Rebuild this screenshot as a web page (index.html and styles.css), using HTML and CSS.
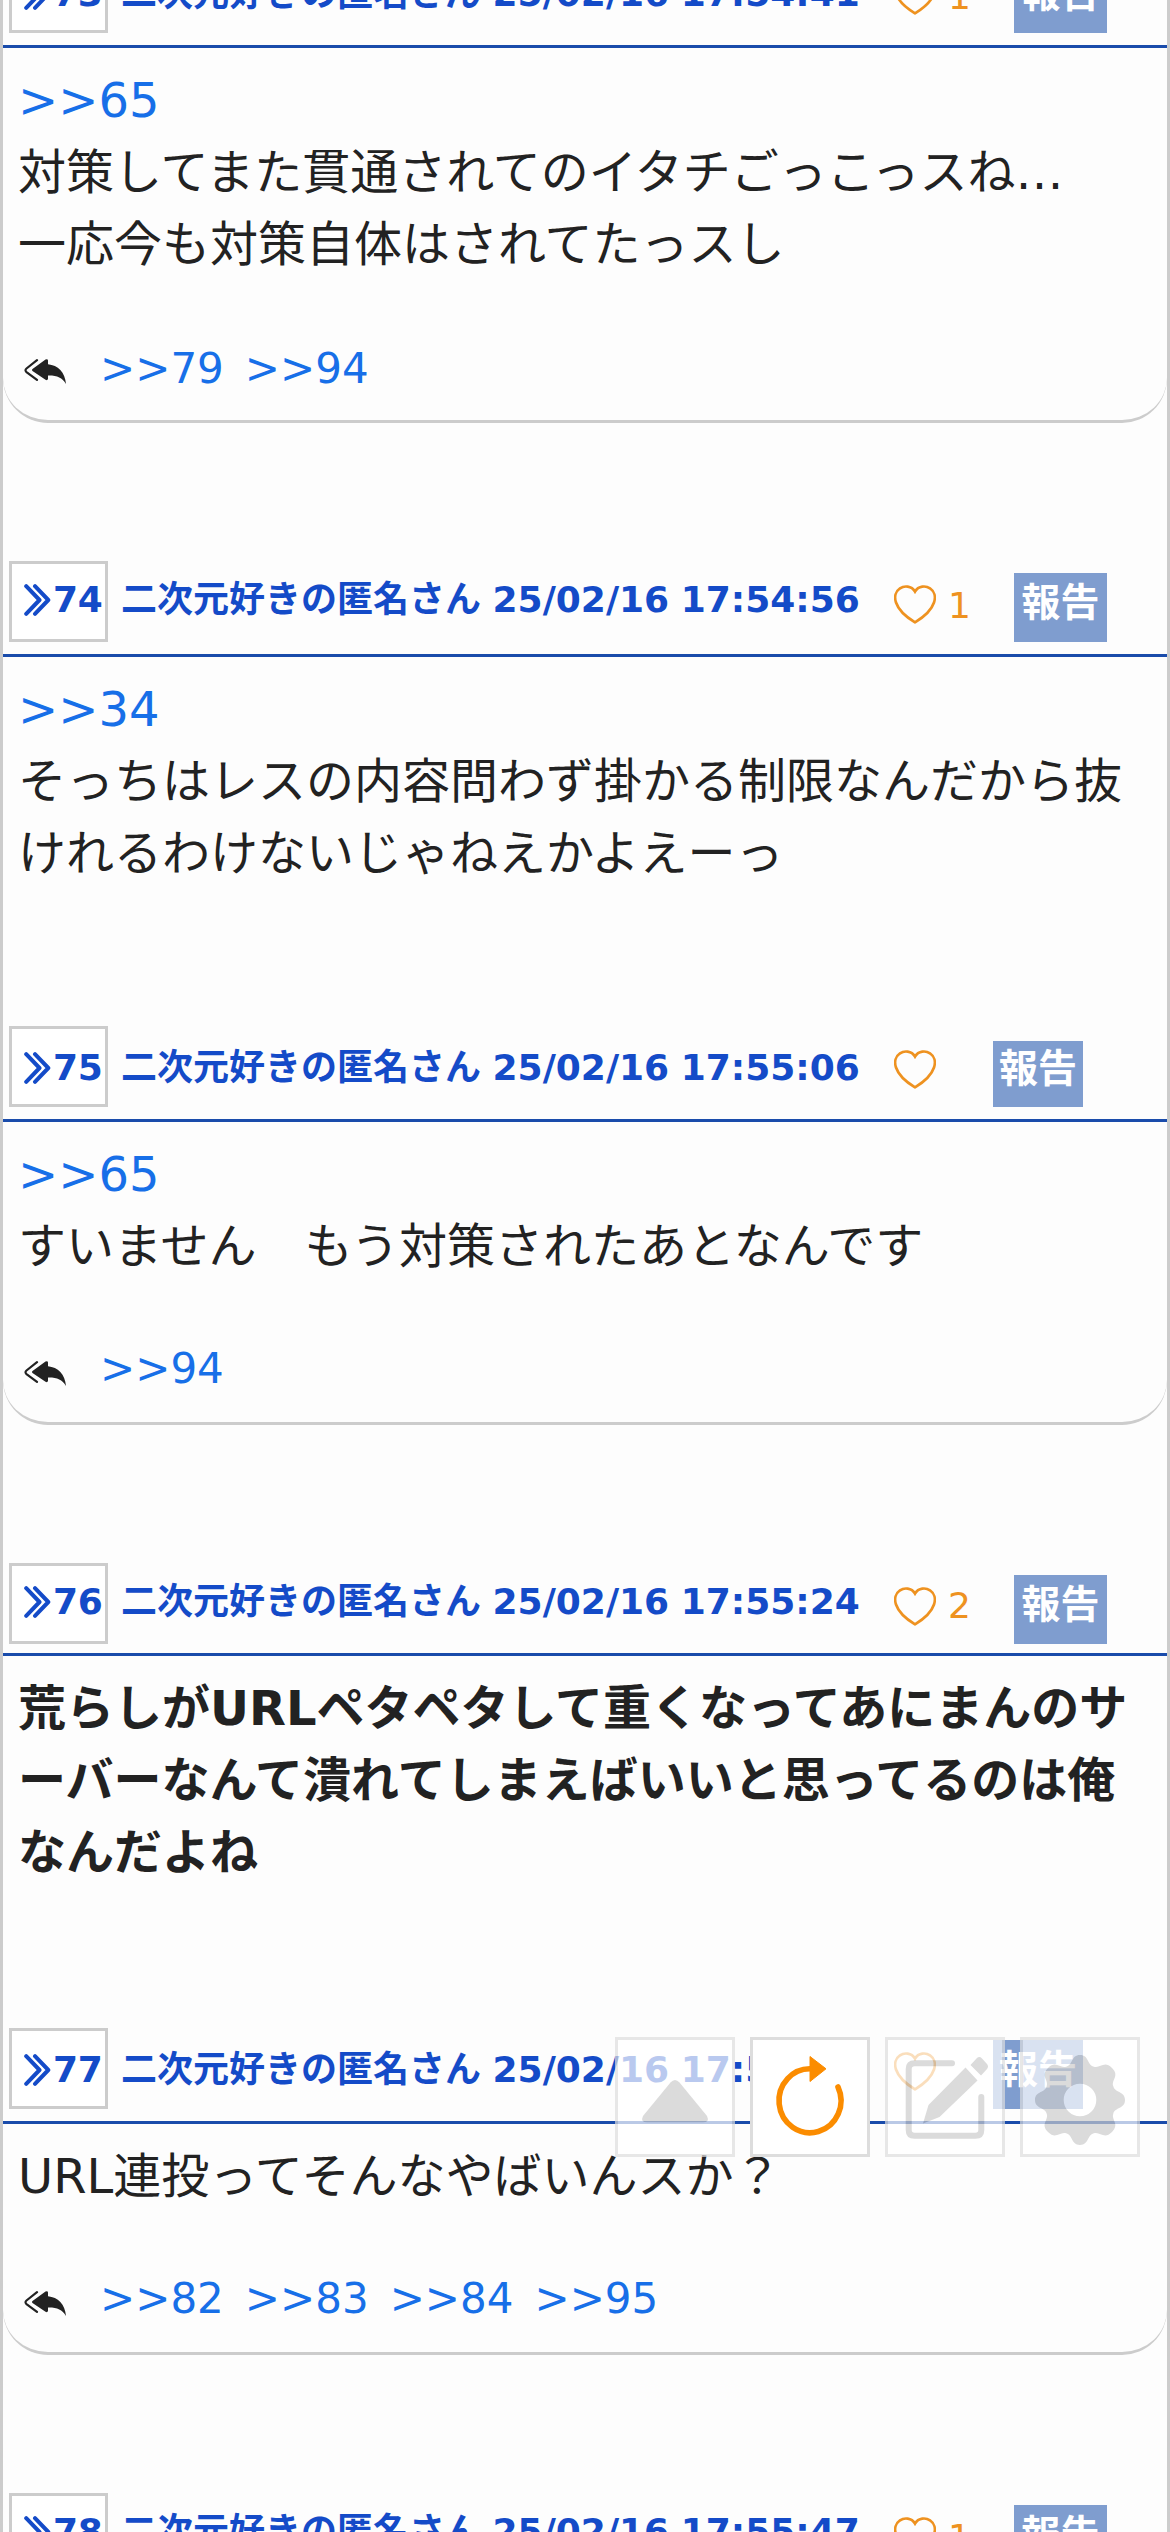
FILE: index.html
```html
<!DOCTYPE html>
<html lang="ja">
<head>
<meta charset="utf-8">
<title>スレッド</title>
<link rel="stylesheet" href="styles.css">
</head>
<body>
<svg class="defs" width="0" height="0">
  <symbol id="chev" viewBox="0 0 27 32"><path d="M2.200 2.200 15.500 16 2.200 29.800M11 2.200 24.300 16 11 29.800" fill="none" stroke="currentColor" stroke-width="4" stroke-linecap="round" stroke-linejoin="round"/></symbol>
  <symbol id="heart" viewBox="0 0 42 39"><path d="M21 6.600C17.500 .4 10 .6 6 3.300 1.500 6.200 .2 12 2 17.500 4.500 25 13 32.500 21 37.300 29 32.500 37.500 25 40 17.500 41.800 12 40.500 6.200 36 3.300 32 .6 24.500 .4 21 6.600Z" fill="none" stroke="currentColor" stroke-width="2.700"/></symbol>
  <symbol id="reply" viewBox="0 0 42 25"><path d="M13 1.200 2.500 9.500Q.5 11.300 2.500 13.100L13 20.800" fill="none" stroke="currentColor" stroke-width="2.200" stroke-linecap="round"/><path d="M8.500 10 21.500.5Q23.800-.6 24 1.600V5.200C34 6.200 41 13 42 25 38 18.500 33 16.300 24 16.500V19.800Q23.500 22 21.500 20.700L8.500 12Q7.500 11 8.500 10Z" fill="currentColor"/></symbol>
</svg>
<main class="thread">
  <article class="post">
    <header class="head">
      <a class="num"><svg class="chev"><use href="#chev"/></svg>73</a>
      <span class="name">二次元好きの匿名さん 25/02/16 17:54:41</span>
      <svg class="heart"><use href="#heart"/></svg><span class="count">1</span><span class="report">報告</span>
    </header>
    <div class="text"><a>&gt;&gt;65</a><br>対策してまた貫通されてのイタチごっこっスね…<br>一応今も対策自体はされてたっスし</div>
    <footer class="replies low"><svg class="reply"><use href="#reply"/></svg><a>&gt;&gt;79</a><a>&gt;&gt;94</a></footer>
  </article>
  <article class="post">
    <header class="head high">
      <a class="num"><svg class="chev"><use href="#chev"/></svg>74</a>
      <span class="name">二次元好きの匿名さん 25/02/16 17:54:56</span>
      <svg class="heart"><use href="#heart"/></svg><span class="count">1</span><span class="report">報告</span>
    </header>
    <div class="text last"><a>&gt;&gt;34</a><br>そっちはレスの内容問わず掛かる制限なんだから抜<br>けれるわけないじゃねえかよえーっ</div>
  </article>
  <article class="post">
    <header class="head">
      <a class="num"><svg class="chev"><use href="#chev"/></svg>75</a>
      <span class="name">二次元好きの匿名さん 25/02/16 17:55:06</span>
      <svg class="heart"><use href="#heart"/></svg><span class="count none"></span><span class="report small short">報告</span>
    </header>
    <div class="text"><a>&gt;&gt;65</a><br>すいません　もう対策されたあとなんです</div>
    <footer class="replies"><svg class="reply"><use href="#reply"/></svg><a>&gt;&gt;94</a></footer>
  </article>
  <article class="post">
    <header class="head high tight">
      <a class="num"><svg class="chev"><use href="#chev"/></svg>76</a>
      <span class="name">二次元好きの匿名さん 25/02/16 17:55:24</span>
      <svg class="heart"><use href="#heart"/></svg><span class="count">2</span><span class="report">報告</span>
    </header>
    <div class="text last bold">荒らしがURLペタペタして重くなってあにまんのサ<br>ーバーなんて潰れてしまえばいいと思ってるのは俺<br>なんだよね</div>
  </article>
  <article class="post">
    <header class="head">
      <a class="num"><svg class="chev"><use href="#chev"/></svg>77</a>
      <span class="name">二次元好きの匿名さん 25/02/16 17:55:35</span>
      <svg class="heart"><use href="#heart"/></svg><span class="count none"></span><span class="report small">報告</span>
    </header>
    <div class="text">URL連投ってそんなやばいんスか？</div>
    <footer class="replies"><svg class="reply"><use href="#reply"/></svg><a>&gt;&gt;82</a><a>&gt;&gt;83</a><a>&gt;&gt;84</a><a>&gt;&gt;95</a></footer>
  </article>
  <article class="post">
    <header class="head high">
      <a class="num"><svg class="chev"><use href="#chev"/></svg>78</a>
      <span class="name">二次元好きの匿名さん 25/02/16 17:55:47</span>
      <svg class="heart"><use href="#heart"/></svg><span class="count">1</span><span class="report">報告</span>
    </header>
  </article>
</main>
<nav class="tools">
  <a class="tool"><svg viewBox="0 0 120 120"><path d="M55.500 45.500Q60 40.500 64.500 45.500L92 79Q95 85.300 88 85.300H32Q25 85.300 28 79Z" fill="#ccc"/></svg></a>
  <a class="tool active"><svg viewBox="0 0 120 120"><path d="M62 31.800A31 32 0 1 0 88 50" fill="none" stroke="#fb8c00" stroke-width="5.600" stroke-linecap="round"/><path d="M60 19.500 76 31.800 60 44.500Z" fill="#fb8c00" stroke="#fb8c00" stroke-width="1" stroke-linejoin="round"/></svg></a>
  <a class="tool"><svg viewBox="0 0 120 120"><path d="M67 26.200H29.500Q23.700 26.200 23.700 32V93Q23.700 98.800 29.500 98.800H90.500Q96.300 98.800 96.300 93V60" fill="none" stroke="#ccc" stroke-width="6" stroke-linecap="round"/><path d="M80.500 30.500 92.500 43.500 54.500 80 38 86.500 43.500 68ZM85.500 28 92 21Q94.500 19 97 21.500L102 27Q104 29.500 102 32L96 38.500Z" fill="#ccc"/></svg></a>
  <a class="tool"><svg viewBox="0 0 120 120"><path fill="#ccc" fill-rule="evenodd" d="M46.200 29.700C53 28 51 18 60 18 69 18 67 28 73.800 29.700 80 32 84 23 92 31 100 39 91 43 93.300 49.200 95 56 105 54 105 63 105 72 95 70 93.300 76.800 91 83 100 87 92 95 84 103 80 94 73.800 96.300 67 98 69 108 60 108 51 108 53 98 46.200 96.300 40 94 36 103 28 95 20 87 29 83 26.700 76.800 25 70 15 72 15 63 15 54 25 56 26.700 49.200 29 43 20 39 28 31 36 23 40 32 46.200 29.700ZM60 46.700A16.300 16.300 0 1 0 60 79.300 16.300 16.300 0 1 0 60 46.700Z"/></svg></a>
</nav>
</body>
</html>
```
FILE: styles.css
```css
* { box-sizing: border-box; }
html, body { margin: 0; height: 2532px; overflow: hidden; }
body { background: #fdfdfd; color: #222; font-family: "DejaVu Sans", "Noto Sans CJK JP", sans-serif; }
.defs { position: absolute; }
svg { display: block; flex: none; }
.thread { height: 2532px; border: solid #ccc; border-width: 0 3px; overflow: hidden; }
.post:first-child { margin-top: -48px; }
.head { display: flex; align-items: flex-start; height: 96px; border-bottom: 3px solid #1a4cab; color: #144bc8; font-size: 36px; font-weight: bold; line-height: 48px; white-space: nowrap; }
.head.tight { height: 93px; }
.num { display: flex; flex: none; width: 99px; height: 81px; margin-left: 6px; padding: 15px 0 0 12px; border: 3px solid #ccc; background: #fff; letter-spacing: -.3px; }
.head.high .num { padding-top: 12px; }
.chev { width: 27px; height: 32px; margin: 8px 2px 0 0; }
.name { flex: none; width: 773px; margin: 18px 0 0 13px; word-spacing: -1px; }
.head.high .name { margin-top: 15px; }
.heart { width: 42px; height: 39px; margin-top: 24px; color: #ee9220; }
.count { flex: none; width: 66px; margin: 21px 0 0 12px; color: #ee9220; font-weight: normal; }
.count.none { width: 45px; }
.head.tight .count { margin-top: 19px; }
.report { flex: none; width: 93px; height: 69px; margin-top: 12px; background: #7f9dcf; color: #fff; font-size: 39px; line-height: 60px; text-align: center; }
.report.small { width: 90px; }
.report.short { height: 66px; margin-top: 15px; line-height: 56px; }
.text { padding: 16px 15px 0; font-size: 48px; line-height: 72px; white-space: nowrap; }
.text.bold { font-weight: bold; }
.text.last { padding-bottom: 137px; }
.text.last.bold { padding-bottom: 140px; }
.text a, .replies a { color: #176fe8; }
.replies { display: flex; align-items: flex-start; height: 143px; padding: 63px 0 0 21px; border-bottom: 3px solid #ccc; border-radius: 0 0 45px 45px; margin-bottom: 138px; font-size: 42px; line-height: 48px; }
.replies.low a { margin-top: 2px; }
.reply { width: 42px; height: 25px; margin: 16px 34px 0 0; }
.replies a { margin-right: 21px; }
.tools { position: fixed; left: 615px; top: 2037px; display: flex; gap: 15px; }
.tool { width: 120px; height: 120px; border: 3px solid #ddd; background: #fff; opacity: .7; }
.tool.active { opacity: 1; }
.tool svg { width: 120px; height: 120px; margin: -3px; }
```
